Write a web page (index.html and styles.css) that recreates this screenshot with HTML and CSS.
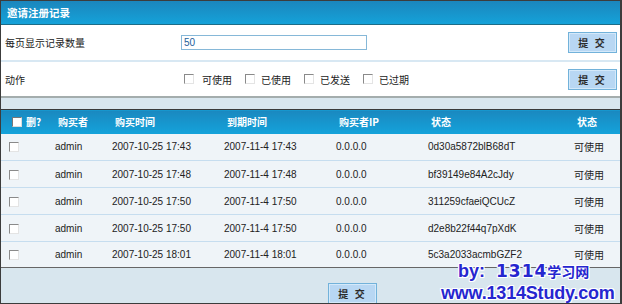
FILE: index.html
```html
<!DOCTYPE html>
<html lang="zh-CN">
<head>
    <meta charset="UTF-8">
    <title>邀请注册记录</title>
    <link rel="stylesheet" href="styles.css">
</head>
<body>
    <div class="frame">
        <div class="title-bar">邀请注册记录</div>

        <div class="form-row">
            <div class="field-label">每页显示记录数量</div>
            <div class="field"><input class="text-input" type="text" value="50"></div>
            <button class="btn">提 交</button>
        </div>

        <div class="form-row form-row-last">
            <div class="field-label">动作</div>
            <div class="field checks">
                <span class="check-item"><span class="cbox"></span>可使用</span>
                <span class="check-item"><span class="cbox"></span>已使用</span>
                <span class="check-item"><span class="cbox"></span>已发送</span>
                <span class="check-item"><span class="cbox"></span>已过期</span>
            </div>
            <button class="btn">提 交</button>
        </div>

        <div class="spacer"></div>

        <table class="records">
            <colgroup>
                <col style="width: 51px">
                <col style="width: 57px">
                <col style="width: 112px">
                <col style="width: 112px">
                <col style="width: 92px">
                <col style="width: 146px">
                <col>
            </colgroup>
            <thead>
                <tr>
                    <th class="col-del"><span class="cbox cbox-head"></span>删?</th>
                    <th>购买者</th>
                    <th>购买时间</th>
                    <th>到期时间</th>
                    <th>购买者IP</th>
                    <th>状态</th>
                    <th>状态</th>
                </tr>
            </thead>
            <tbody>
                <tr>
                    <td class="col-del"><span class="cbox"></span></td>
                    <td>admin</td><td>2007-10-25 17:43</td><td>2007-11-4 17:43</td>
                    <td>0.0.0.0</td><td>0d30a5872blB68dT</td><td class="cn">可使用</td>
                </tr>
                <tr>
                    <td class="col-del"><span class="cbox"></span></td>
                    <td>admin</td><td>2007-10-25 17:48</td><td>2007-11-4 17:48</td>
                    <td>0.0.0.0</td><td>bf39149e84A2cJdy</td><td class="cn">可使用</td>
                </tr>
                <tr>
                    <td class="col-del"><span class="cbox"></span></td>
                    <td>admin</td><td>2007-10-25 17:50</td><td>2007-11-4 17:50</td>
                    <td>0.0.0.0</td><td>311259cfaeiQCUcZ</td><td class="cn">可使用</td>
                </tr>
                <tr>
                    <td class="col-del"><span class="cbox"></span></td>
                    <td>admin</td><td>2007-10-25 17:50</td><td>2007-11-4 17:50</td>
                    <td>0.0.0.0</td><td>d2e8b22f44q7pXdK</td><td class="cn">可使用</td>
                </tr>
                <tr>
                    <td class="col-del"><span class="cbox"></span></td>
                    <td>admin</td><td>2007-10-25 18:01</td><td>2007-11-4 18:01</td>
                    <td>0.0.0.0</td><td>5c3a2033acmbGZF2</td><td class="cn">可使用</td>
                </tr>
            </tbody>
        </table>

        <div class="footer">
            <button class="btn">提 交</button>
        </div>

        <div class="watermark">
            <div class="wm-line wm-top">by:<span class="wm-num">1314</span><span class="wm-cn">学习网</span></div>
            <div class="wm-line wm-url">www.1314Study.com</div>
        </div>
    </div>
</body>
</html>
```

FILE: styles.css
```css
* {
    box-sizing: border-box;
}
body {
    margin: 0;
    font-family: "Liberation Sans", "Noto Sans CJK SC", Arial, sans-serif;
    font-size: 10px;
    color: #222;
}
.frame {
    position: relative;
    width: 622px;
    height: 304px;
    border: 1px solid #3c3c3c;
    border-right-width: 2px;
    background-color: #d8e6ee;
    overflow: hidden;
}
.title-bar {
    height: 24px;
    padding-left: 6px;
    line-height: 23px;
    background: linear-gradient(#1b86bd, #15a2d9);
    border-bottom: 1px solid #1c6c87;
    color: #fff;
    font-size: 10.5px;
    font-weight: bold;
    font-family: "Noto Sans CJK SC", sans-serif;
}
.form-row {
    display: flex;
    align-items: center;
    height: 35px;
    padding: 0 3px 0 4px;
    background-color: #fff;
}
.form-row-last {
    height: 38px;
    border-top: 2px solid #d8e8f3;
    border-bottom: 2px solid #a4adad;
}
.field-label {
    width: 176px;
    font-family: "Noto Sans CJK SC", sans-serif;
}
.field {
    flex: 1;
}
.text-input {
    display: block;
    width: 186px;
    height: 15px;
    padding: 0 2px;
    border: 1px solid #86b8d8;
    font-family: "Liberation Sans", sans-serif;
    font-size: 10px;
    color: #1d5e9a;
    outline: none;
}
.btn {
    width: 49px;
    height: 21px;
    padding: 0;
    border: 1px solid #72b2da;
    box-shadow: inset 0 0 0 1px #d4e9fa;
    background-color: #b8d7f3;
    font-family: "Noto Sans CJK SC", sans-serif;
    font-size: 10px;
    font-weight: bold;
    color: #2b2b2b;
    letter-spacing: 2px;
}
.checks {
    display: flex;
    padding-left: 3px;
    font-family: "Noto Sans CJK SC", sans-serif;
}
.check-item {
    display: flex;
    align-items: center;
    margin-right: 13px;
}
.check-item:first-child .cbox {
    margin-right: 8px;
}
.cbox {
    display: inline-block;
    width: 10px;
    height: 10px;
    margin-right: 6px;
    border-top: 1px solid #8a8a8a;
    border-left: 1px solid #8a8a8a;
    border-right: 1px solid #e4e4e4;
    border-bottom: 1px solid #e4e4e4;
    background-color: #fff;
}
.spacer {
    height: 11px;
}
.records {
    width: 619px;
    border-collapse: collapse;
    table-layout: fixed;
    border-top: 1px solid #3a3a3a;
    border-bottom: 1px solid #666;
}
.records th {
    height: 24px;
    padding: 0 0 0 6px;
    background: linear-gradient(#1a88bf, #14a3db);
    color: #fff;
    font-family: "Noto Sans CJK SC", sans-serif;
    font-weight: bold;
    font-size: 10px;
    text-align: left;
}
.records td {
    height: 27px;
    padding: 0 0 0 3px;
    background-color: #eff4f8;
    border-bottom: 1px solid #c6ddef;
}
.records tr:last-child td {
    height: 26px;
    border-bottom: none;
}
.records .col-del {
    padding-left: 8px;
}
.records th.col-del {
    padding-left: 11px;
}
.records th .cbox-head {
    vertical-align: -1px;
    margin-right: 4px;
    border-color: #777 #ddd #ddd #777;
}
.records td .cbox {
    vertical-align: middle;
}
.records .cn {
    font-family: "Noto Sans CJK SC", sans-serif;
}
.footer {
    padding: 15px 0 0 327px;
}
.watermark {
    position: absolute;
    left: 440px;
    bottom: -1px;
    font-family: "Liberation Sans", "Noto Sans CJK SC", sans-serif;
    font-weight: bold;
    color: #2626cf;
    line-height: 22px;
    white-space: nowrap;
    text-shadow: 1px 0 #fff, -1px 0 #fff, 0 1px #fff, 0 -1px #fff, 1px 1px #fff, -1px -1px #fff, 1px -1px #fff, -1px 1px #fff;
}
.wm-top {
    padding-left: 17px;
    font-size: 18px;
}
.wm-num {
    margin-left: 11px;
    font-family: "DejaVu Sans", sans-serif;
    font-size: 17px;
    letter-spacing: 1px;
}
.wm-cn {
    font-size: 14px;
    font-family: "Noto Sans CJK SC", sans-serif;
}
.wm-url {
    font-size: 18px;
    letter-spacing: -0.2px;
}
```
